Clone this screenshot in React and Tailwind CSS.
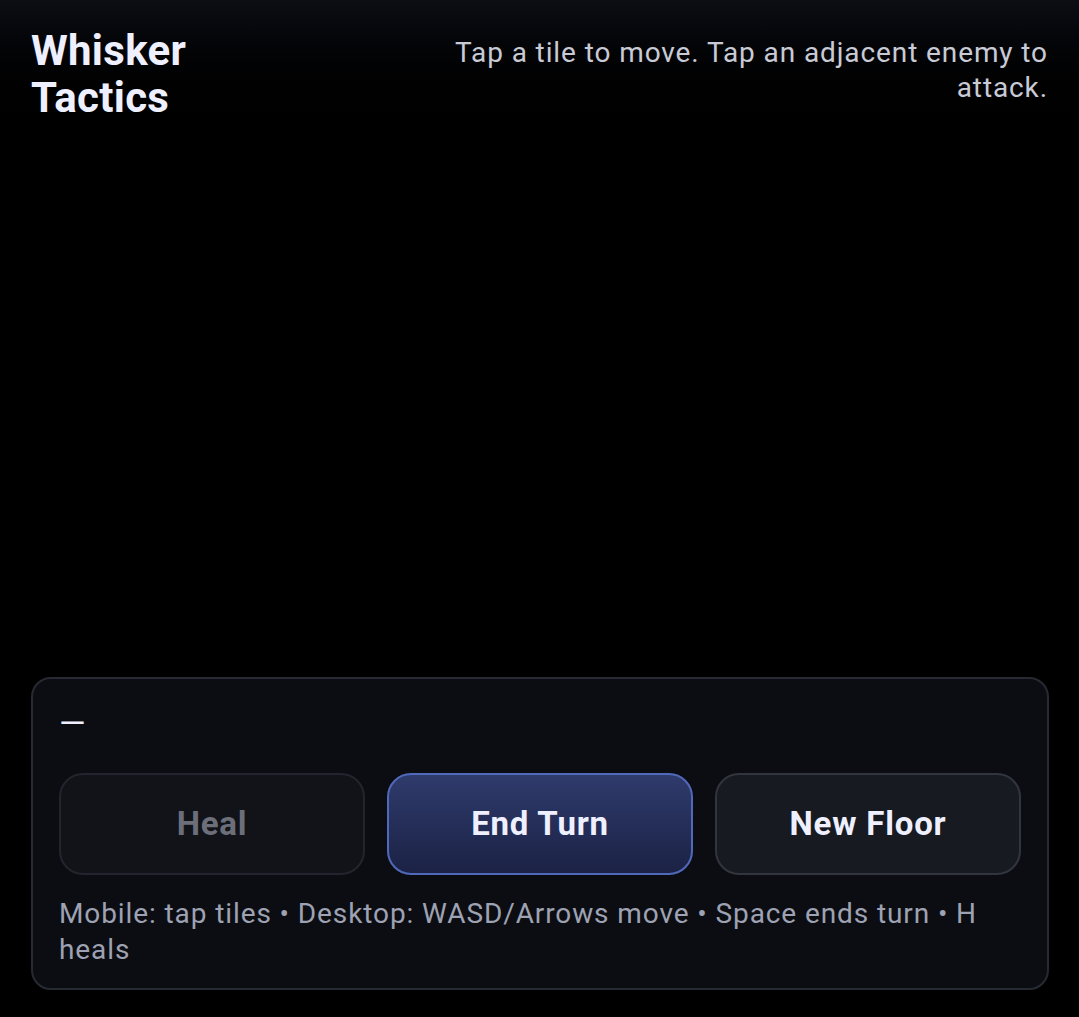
import React from 'react';

const App = () => {
  return (
    <div
      className="min-h-[1017px] w-full bg-black text-[#eef0ff] flex flex-col"
      style={{ fontFamily: 'Roboto, "Noto Sans", sans-serif' }}
    >
      {/* Header */}
      <header className="flex justify-between items-start px-[31px] pt-[27px] pb-[24px] bg-gradient-to-b from-[#0c0e14] to-black">
        <h1 className="w-[200px] text-[42px] leading-[47px] font-bold tracking-[0.3px] text-[#eef0ff]">
          Whisker Tactics
        </h1>
        <p className="w-[640px] text-right text-[28px] leading-[35px] tracking-[0.9px] text-[#c8cbd6] pt-[8px]">
          Tap a tile to move. Tap an adjacent enemy to attack.
        </p>
      </header>

      {/* Board area (empty) */}
      <div className="flex-1" />

      {/* Controls panel */}
      <div className="ml-[31px] mr-[30px] mb-[27px] rounded-[20px] border-2 border-[#272a32] bg-[#0b0d12] px-[26px] pt-[29px] pb-[20px]">
        <div className="h-[30px] text-[34px] leading-[30px] text-[#eef0ff]">—</div>

        <div className="mt-[35px] grid grid-cols-3 gap-[22px]">
          <button
            disabled
            className="h-[102px] rounded-[24px] border-2 border-[#22252d] bg-[#111319] text-[33px] font-bold tracking-[0.8px] text-[#6c6f79]"
          >
            Heal
          </button>
          <button className="h-[102px] rounded-[24px] border-2 border-[#5069bb] bg-gradient-to-b from-[#2f3b6c] to-[#1b2245] text-[33px] font-bold tracking-[0.8px] text-[#eef0ff]">
            End Turn
          </button>
          <button className="h-[102px] rounded-[24px] border-2 border-[#32353d] bg-[#171a21] text-[33px] font-bold tracking-[0.8px] text-[#eef0ff]">
            New Floor
          </button>
        </div>

        <p className="mt-[21px] text-[28px] leading-[36px] tracking-[0.9px] text-[#9ea2b2]">
          Mobile: tap tiles • Desktop: WASD/Arrows move • Space ends turn • H heals
        </p>
      </div>
    </div>
  );
};

export default App;
